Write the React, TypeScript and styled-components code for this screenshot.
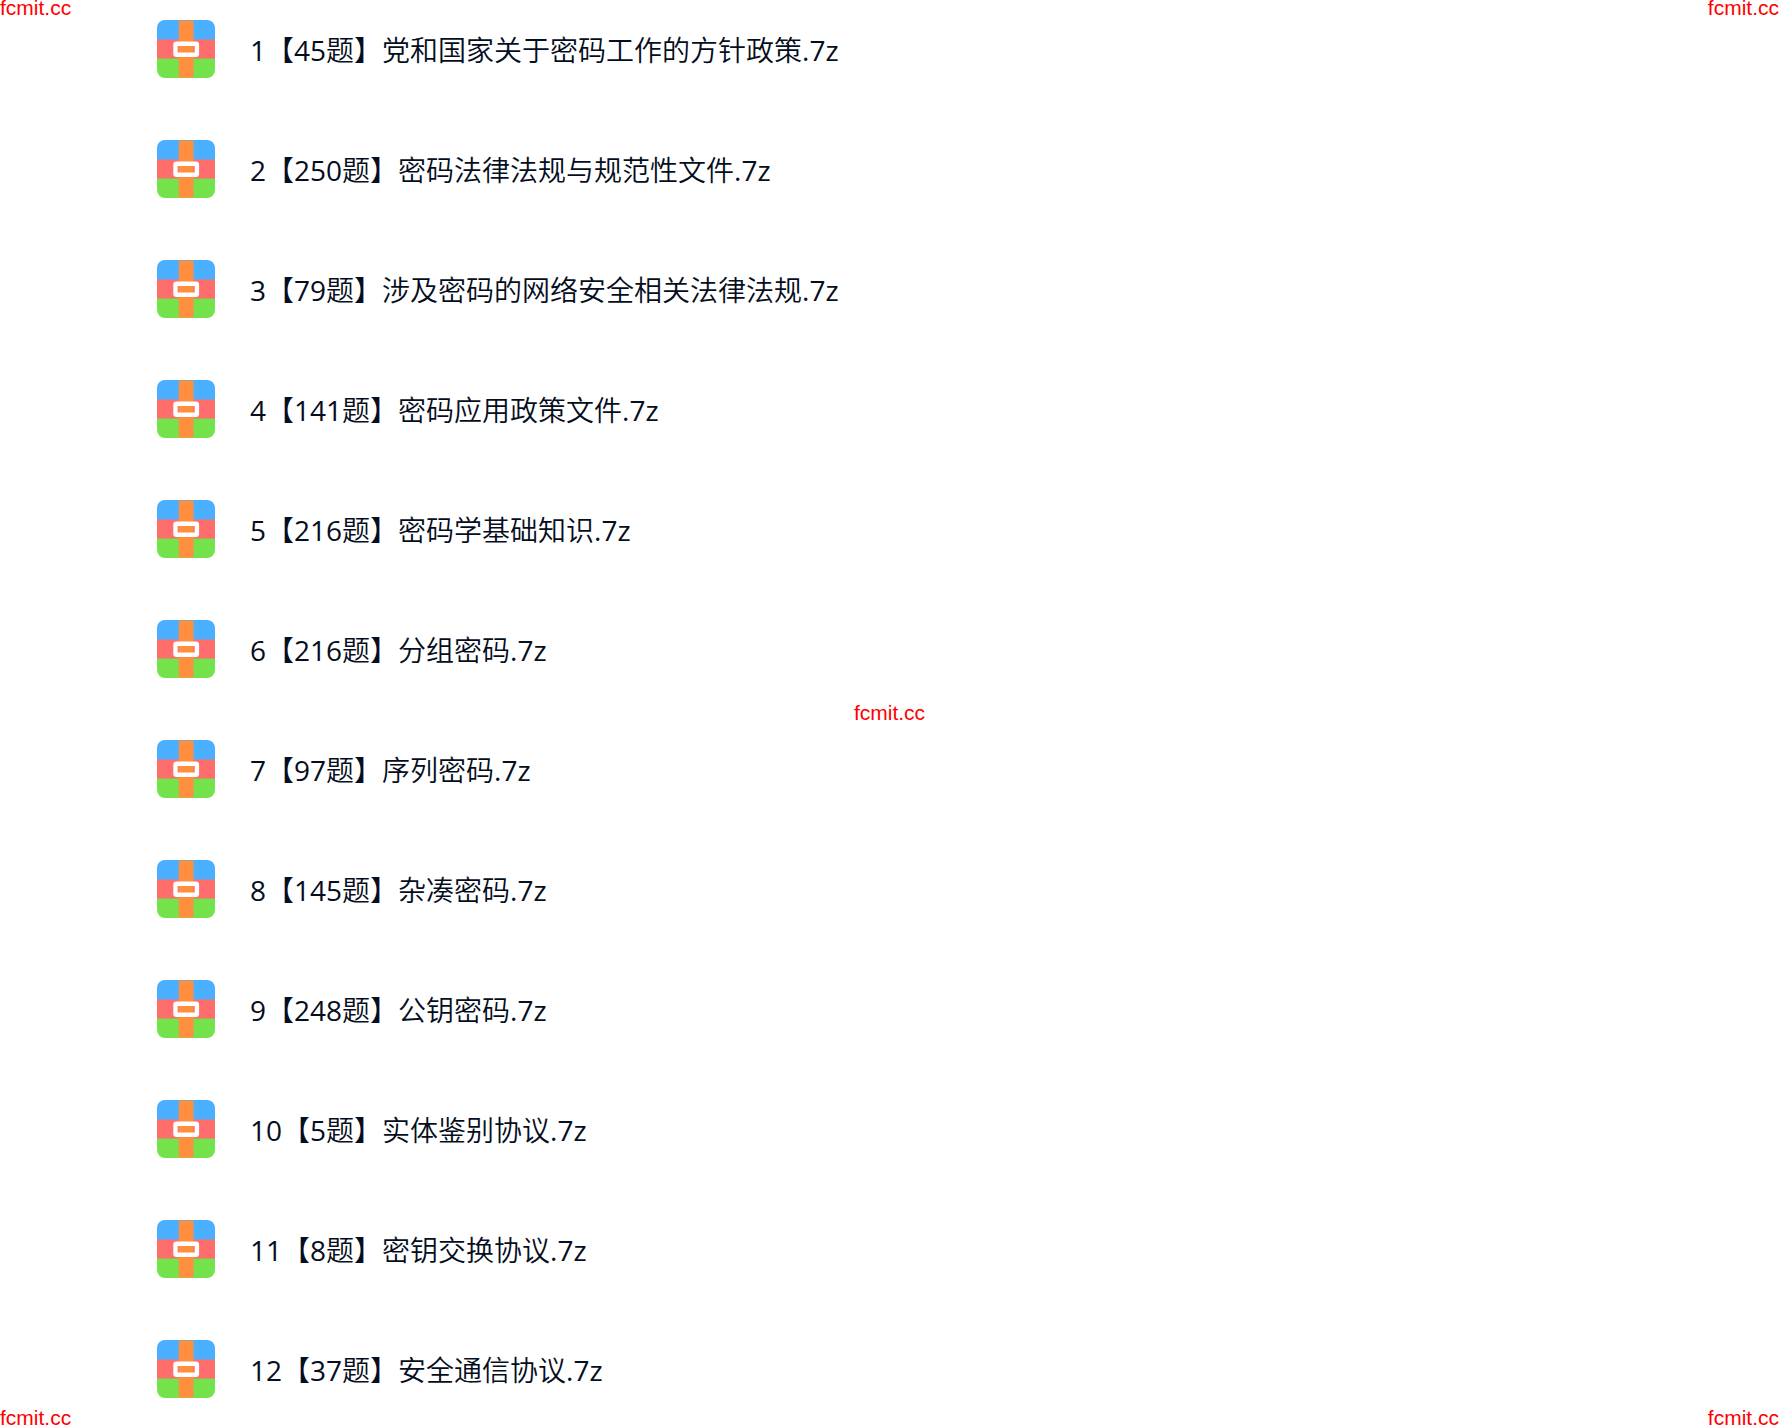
import React from 'react';
import styled, { createGlobalStyle } from 'styled-components';

const GlobalStyle = createGlobalStyle`
  body {
    margin: 0;
    background: #ffffff;
  }
`;

const Page = styled.main`
  position: relative;
  min-height: 100vh;
  box-sizing: border-box;
  overflow: hidden;
  padding: 20px 24px 0 157px;
`;

const FileList = styled.ul`
  list-style: none;
  margin: 0;
  padding: 0 0 27px;
  display: flex;
  flex-direction: column;
  gap: 62px;
`;

const FileRow = styled.li`
  display: flex;
  align-items: center;
  gap: 35px;
  height: 58px;
`;

const Icon = styled.svg`
  flex: none;
  width: 58px;
  height: 58px;
`;

const FileName = styled.span`
  padding-top: 2px;
  color: #050d20;
  font-family: 'Open Sans', 'Noto Sans CJK SC DemiLight', 'Noto Sans CJK SC', sans-serif;
  font-size: 28px;
  font-weight: 400;
  line-height: 40px;
  white-space: nowrap;
`;

type Place = 'top-left' | 'top-right' | 'center' | 'bottom-left' | 'bottom-right';

const places: Record<Place, string> = {
  'top-left': 'top: 0; left: 0;',
  'top-right': 'top: 0; right: 0;',
  center: 'top: 50%; left: 50%; transform: translate(-50%, -50%);',
  'bottom-left': 'bottom: -1px; left: 0;',
  'bottom-right': 'bottom: -1px; right: 0;',
};

const Watermark = styled.span<{ $place: Place }>`
  position: absolute;
  ${({ $place }) => places[$place]}
  color: #ff0000;
  font-family: 'Liberation Sans', Arial, sans-serif;
  font-size: 21px;
  line-height: 16px;
  pointer-events: none;
`;

const files = [
  '1【45题】党和国家关于密码工作的方针政策.7z',
  '2【250题】密码法律法规与规范性文件.7z',
  '3【79题】涉及密码的网络安全相关法律法规.7z',
  '4【141题】密码应用政策文件.7z',
  '5【216题】密码学基础知识.7z',
  '6【216题】分组密码.7z',
  '7【97题】序列密码.7z',
  '8【145题】杂凑密码.7z',
  '9【248题】公钥密码.7z',
  '10【5题】实体鉴别协议.7z',
  '11【8题】密钥交换协议.7z',
  '12【37题】安全通信协议.7z',
];

function ArchiveIcon() {
  return (
    <Icon viewBox="0 0 58 58" aria-hidden="true">
      <path d="M0 20V8a8 8 0 0 1 8-8h42a8 8 0 0 1 8 8v12z" fill="#4aafff" />
      <path d="M0 38h58v12a8 8 0 0 1-8 8H8a8 8 0 0 1-8-8z" fill="#74e34b" />
      <path d="M0 19.5h58v19H0z" fill="#ff6d6d" />
      <path d="M21.7 0.5h14.8v57.2H21.7z" fill="#ff8f3f" />
      <rect x="18.5" y="23.7" width="21.4" height="11" rx="1" fill="none" stroke="#ffffff" strokeWidth="4.4" />
    </Icon>
  );
}

export default function App() {
  return (
    <Page>
      <GlobalStyle />
      <FileList>
        {files.map((name) => (
          <FileRow key={name}>
            <ArchiveIcon />
            <FileName>{name}</FileName>
          </FileRow>
        ))}
      </FileList>
      {(Object.keys(places) as Place[]).map((place) => (
        <Watermark key={place} $place={place}>
          fcmit.cc
        </Watermark>
      ))}
    </Page>
  );
}
